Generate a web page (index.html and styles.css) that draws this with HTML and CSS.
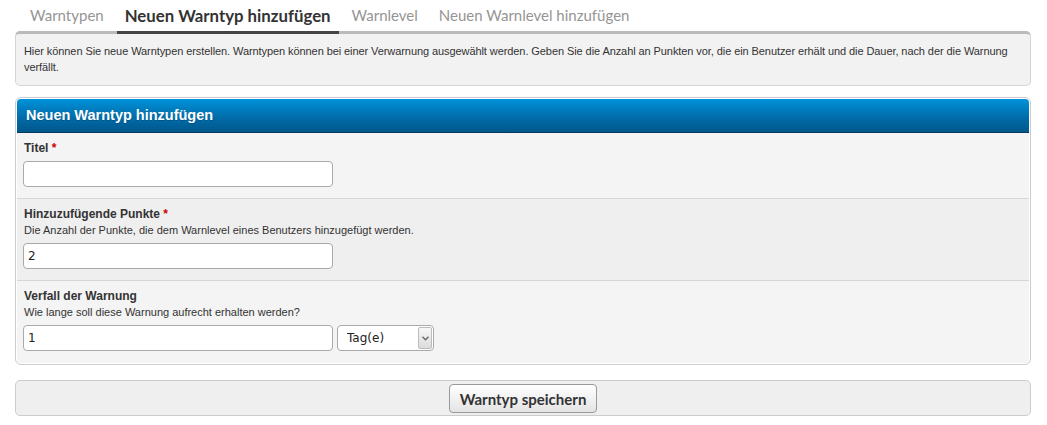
FILE: index.html
```html
<!DOCTYPE html>
<html lang="de">
<head>
  <meta charset="UTF-8" />
  <title>Warnsystem - Neuen Warntyp hinzufügen</title>
  <link rel="stylesheet" href="styles.css">
</head>
<body>
  <ul class="tabs">
    <li><a href="#">Warntypen</a></li>
    <li class="active"><a href="#">Neuen Warntyp hinzufügen</a></li>
    <li><a href="#">Warnlevel</a></li>
    <li><a href="#">Neuen Warnlevel hinzufügen</a></li>
  </ul>

  <div class="description">
    Hier können Sie neue Warntypen erstellen. Warntypen können bei einer Verwarnung ausgewählt werden. Geben Sie die Anzahl an Punkten vor, die ein Benutzer erhält und die Dauer, nach der die Warnung verfällt.
  </div>

  <form class="form-box" onsubmit="return false;">
    <div class="form-head">Neuen Warntyp hinzufügen</div>

    <div class="form-row">
      <label for="title">Titel <em>*</em></label>
      <input type="text" id="title" class="text-input" />
    </div>

    <div class="form-row alt">
      <label for="points">Hinzuzufügende Punkte <em>*</em></label>
      <div class="desc">Die Anzahl der Punkte, die dem Warnlevel eines Benutzers hinzugefügt werden.</div>
      <input type="text" id="points" class="text-input" value="2" />
    </div>

    <div class="form-row last">
      <label for="expire">Verfall der Warnung</label>
      <div class="desc">Wie lange soll diese Warnung aufrecht erhalten werden?</div>
      <div class="inline">
        <input type="text" id="expire" class="text-input" value="1" />
        <div class="select-wrap">
          <select class="select">
            <option>Tag(e)</option>
            <option>Woche(n)</option>
            <option>Monat(e)</option>
            <option>Niemals</option>
          </select>
          <span class="select-arrow">
            <svg width="7" height="5" viewBox="0 0 7 5"><path d="M0.5 0.8 L3.5 3.8 L6.5 0.8" fill="none" stroke="#666" stroke-width="1.3"/></svg>
          </span>
        </div>
      </div>
    </div>
  </form>

  <div class="buttons">
    <button type="button">Warntyp speichern</button>
  </div>
</body>
</html>
```

FILE: styles.css
```css
body { margin: 0; padding: 0 16px 0 15px; background: #fff; color: #333; font-family: "Liberation Sans", Arial, sans-serif; font-size: 11px; }

.tabs { list-style: none; margin: 0 0 -3px 7px; padding: 0; display: flex; gap: 5px; position: relative; z-index: 1; }
.tabs li { border-bottom: 3px solid transparent; }
.tabs li a { display: block; padding: 5px 8px 5px; line-height: 21px; font-family: Lato, sans-serif; font-size: 15px; color: #959595; text-decoration: none; }
.tabs li.active { border-bottom-color: #444; }
.tabs li.active a { color: #333; font-weight: bold; font-size: 16.8px; }

.description { background: #f2f2f2; border: 1px solid #d4d4d4; border-top: 3px solid #bbb; border-radius: 5px; padding: 9px 8px 10px; line-height: 16px; color: #333; letter-spacing: -0.08px; }

.form-box { margin: 11px 0 0; background: #fff; border: 1px solid #ccc; border-radius: 6px; padding: 1px; }
.form-head { height: 33px; line-height: 33px; padding: 0 9px; color: #fff; font-weight: bold; font-size: 14.5px; background: linear-gradient(#0192da, #016aa6 60%, #00578c); border-bottom: 1px solid #063a5a; border-radius: 4px 4px 0 0; text-shadow: 0 1px 0 rgba(0,0,0,0.2); }

.form-row { background: #f4f4f4; border-bottom: 1px solid #d6d6d6; padding: 7px 7px 11px 6px; }
.form-row.alt { background: #efefef; }
.form-row.last { border-bottom: none; border-radius: 0 0 4px 4px; padding-bottom: 12px; }
.form-row label { display: block; font-weight: bold; font-size: 12px; line-height: 16px; color: #333; margin: 0 0 5px 1px; }
.form-row label em { color: #c00; font-style: normal; }
.form-row .desc { line-height: 16px; margin: -5px 0 5px 1px; color: #333; }

.text-input { display: block; width: 310px; height: 26px; box-sizing: border-box; border: 1px solid #aaa; border-radius: 4px; padding: 3px 4px; background: #fff; font-family: "DejaVu Sans", sans-serif; font-size: 12px; color: #222; }
.inline { display: flex; gap: 4px; }

.select-wrap { position: relative; }
.select { display: block; width: 97px; height: 26px; box-sizing: border-box; border: 1px solid #aaa; border-radius: 4px; padding: 0 9px; background: #fff; font-family: "DejaVu Sans", sans-serif; font-size: 12px; color: #222; appearance: none; -webkit-appearance: none; }
.select-arrow { position: absolute; right: 2px; top: 2px; bottom: 2px; width: 14px; display: flex; align-items: center; justify-content: center; background: linear-gradient(#f7f7f7, #dcdcdc); border: 1px solid #bbb; border-radius: 2px; box-sizing: border-box; pointer-events: none; }

.buttons { margin-top: 15px; background: #efefef; border: 1px solid #ccc; border-radius: 5px; padding: 3px 0 2px; text-align: center; }
.buttons button { height: 29px; padding: 0 10px; font-family: Lato, sans-serif; font-weight: bold; font-size: 15px; color: #333; background: linear-gradient(#fff, #e4e4e4); border: 1px solid #999; border-radius: 4px; cursor: pointer; }
.buttons button:hover { background: linear-gradient(#f6f6f6, #d8d8d8); }
```
